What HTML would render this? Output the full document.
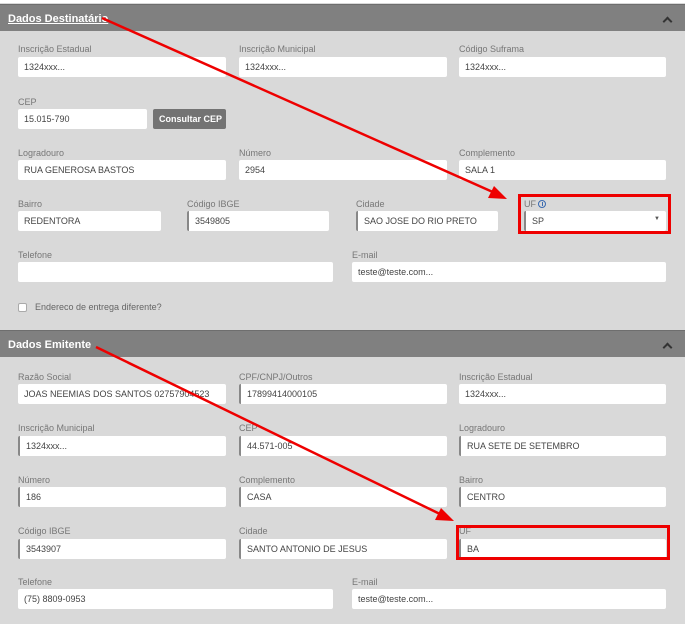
<!DOCTYPE html>
<html><head><meta charset="utf-8"><style>
*{box-sizing:border-box;margin:0;padding:0}
body{width:685px;height:624px;background:#fff;font-family:"Liberation Sans",sans-serif;position:relative;overflow:hidden}
.bg{position:absolute;left:0;width:685px;background:#d9d9d9}
.hd{position:absolute;left:0;width:685px;height:27px;background:#808080;color:#fff;font-weight:bold;font-size:11px;padding:8px 0 0 8px;border-top:1px solid #6e6e6e}
.hd .car{position:absolute;right:14px;width:7px;height:7px;border-left:2px solid #333;border-top:2px solid #333;transform:rotate(45deg);top:13px}
.l{position:absolute;font-size:9px;color:#777}
.i{position:absolute;height:20px;background:#fff;border-radius:2px;font-size:9px;color:#444;padding:5px 0 0 6px;white-space:nowrap;overflow:hidden}
.b{border-left:2px solid #888}
.btn{position:absolute;background:#737373;color:#fff;font-size:9px;font-weight:bold;border-radius:2px;padding:5px 0 0 6px;white-space:nowrap}
.rb{position:absolute;border:3px solid #e00}
</style></head><body>
<div class="bg" style="top:3px;height:621px"></div>
<div class="hd" style="top:4px"><u>Dados Destinatário</u><div class="car"></div></div>

<div class="l" style="left:18px;top:44px">Inscrição Estadual</div><div class="i" style="left:18px;top:57px;width:208px">1324xxx...</div>
<div class="l" style="left:239px;top:44px">Inscrição Municipal</div><div class="i" style="left:239px;top:57px;width:208px">1324xxx...</div>
<div class="l" style="left:459px;top:44px">Código Suframa</div><div class="i" style="left:459px;top:57px;width:207px">1324xxx...</div>

<div class="l" style="left:18px;top:97px">CEP</div><div class="i" style="left:18px;top:109px;width:129px">15.015-790</div>
<div class="btn" style="left:153px;top:109px;width:73px;height:20px">Consultar CEP</div>

<div class="l" style="left:18px;top:148px">Logradouro</div><div class="i" style="left:18px;top:160px;width:208px">RUA GENEROSA BASTOS</div>
<div class="l" style="left:239px;top:148px">Número</div><div class="i" style="left:239px;top:160px;width:208px">2954</div>
<div class="l" style="left:459px;top:148px">Complemento</div><div class="i" style="left:459px;top:160px;width:207px">SALA 1</div>

<div class="l" style="left:18px;top:199px">Bairro</div><div class="i" style="left:18px;top:211px;width:143px">REDENTORA</div>
<div class="l" style="left:187px;top:199px">Código IBGE</div><div class="i b" style="left:187px;top:211px;width:142px">3549805</div>
<div class="l" style="left:356px;top:199px">Cidade</div><div class="i b" style="left:356px;top:211px;width:142px">SAO JOSE DO RIO PRETO</div>
<div class="l" style="left:524px;top:199px">UF</div>
<div style="position:absolute;left:538px;top:200px;width:8px;height:8px;border:1px solid #3a6ab0;border-radius:50%"></div>
<div style="position:absolute;left:541.5px;top:202px;width:1px;height:4px;background:#3a6ab0"></div>
<div class="i b" style="left:524px;top:211px;width:142px">SP<span style="position:absolute;right:6px;top:5px;font-size:6px;color:#555">▼</span></div>
<div class="rb" style="left:518px;top:194px;width:153px;height:40px"></div>

<div class="l" style="left:18px;top:250px">Telefone</div><div class="i" style="left:18px;top:262px;width:315px"></div>
<div class="l" style="left:352px;top:250px">E-mail</div><div class="i" style="left:352px;top:262px;width:314px">teste@teste.com...</div>

<div style="position:absolute;left:18px;top:303px;width:9px;height:9px;background:#fff;border:1px solid #aaa;border-radius:2px"></div>
<div class="l" style="left:35px;top:302px;color:#666">Endereco de entrega diferente?</div>

<div class="hd" style="top:330px">Dados Emitente<div class="car"></div></div>

<div class="l" style="left:18px;top:372px">Razão Social</div><div class="i" style="left:18px;top:384px;width:208px">JOAS NEEMIAS DOS SANTOS 02757904523</div>
<div class="l" style="left:239px;top:372px">CPF/CNPJ/Outros</div><div class="i b" style="left:239px;top:384px;width:208px">17899414000105</div>
<div class="l" style="left:459px;top:372px">Inscrição Estadual</div><div class="i" style="left:459px;top:384px;width:207px">1324xxx...</div>

<div class="l" style="left:18px;top:423px">Inscrição Municipal</div><div class="i b" style="left:18px;top:436px;width:208px">1324xxx...</div>
<div class="l" style="left:239px;top:423px">CEP</div><div class="i b" style="left:239px;top:436px;width:208px">44.571-005</div>
<div class="l" style="left:459px;top:423px">Logradouro</div><div class="i b" style="left:459px;top:436px;width:207px">RUA SETE DE SETEMBRO</div>

<div class="l" style="left:18px;top:475px">Número</div><div class="i b" style="left:18px;top:487px;width:208px">186</div>
<div class="l" style="left:239px;top:475px">Complemento</div><div class="i b" style="left:239px;top:487px;width:208px">CASA</div>
<div class="l" style="left:459px;top:475px">Bairro</div><div class="i b" style="left:459px;top:487px;width:207px">CENTRO</div>

<div class="l" style="left:18px;top:526px">Código IBGE</div><div class="i b" style="left:18px;top:539px;width:208px">3543907</div>
<div class="l" style="left:239px;top:526px">Cidade</div><div class="i b" style="left:239px;top:539px;width:208px">SANTO ANTONIO DE JESUS</div>
<div class="l" style="left:459px;top:526px">UF</div><div class="i b" style="left:459px;top:539px;width:207px">BA</div>
<div class="rb" style="left:456px;top:525px;width:214px;height:35px"></div>

<div class="l" style="left:18px;top:577px">Telefone</div><div class="i" style="left:18px;top:589px;width:315px">(75) 8809-0953</div>
<div class="l" style="left:352px;top:577px">E-mail</div><div class="i" style="left:352px;top:589px;width:314px">teste@teste.com...</div>

<svg style="position:absolute;left:0;top:0" width="685" height="624">
<g stroke="#e00" stroke-width="2.5" fill="#e00">
<line x1="102" y1="18" x2="495" y2="193"/>
<polygon points="507,199 488,198 494,186" stroke="none"/>
<line x1="96" y1="347" x2="442" y2="515"/>
<polygon points="454,521 435,520 441,508" stroke="none"/>
</g></svg>
</body></html>
